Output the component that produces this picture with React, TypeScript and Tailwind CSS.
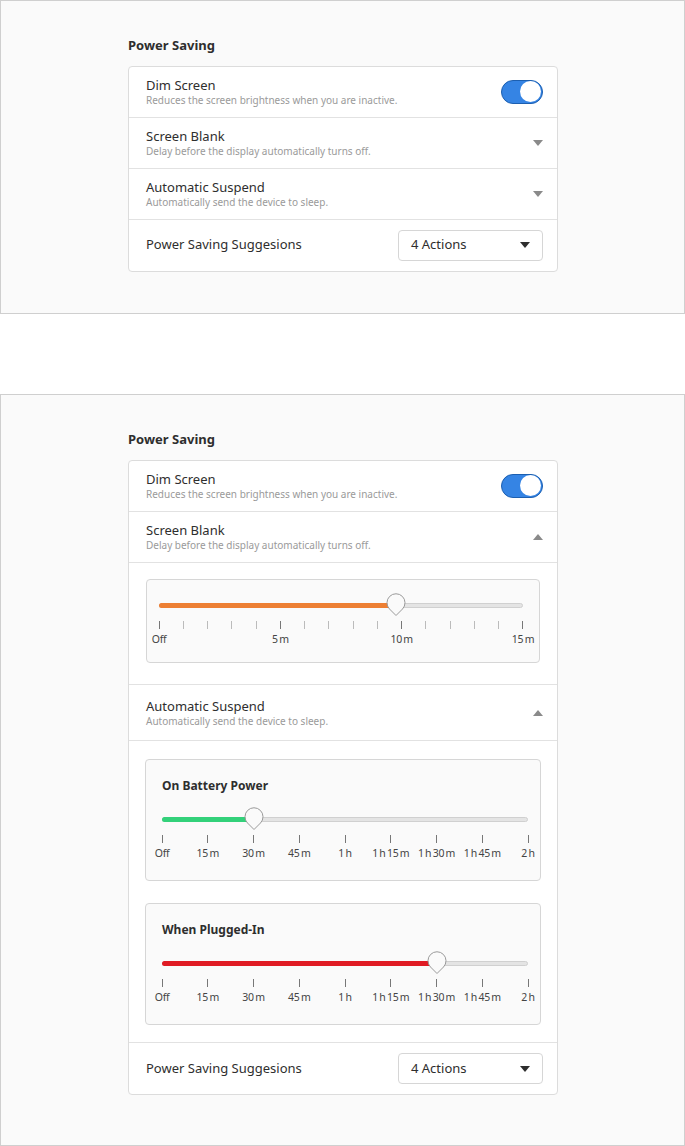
import React from 'react';

const font = { fontFamily: '"Noto Sans", sans-serif' };

const Chevron: React.FC<{ up?: boolean }> = ({ up }) => (
  <svg width="10" height="6" viewBox="0 0 10 6" className={up ? 'rotate-180' : ''}>
    <path d="M0 0h10L5 6z" fill="#8a8a8a" />
  </svg>
);

const Toggle: React.FC = () => (
  <div className="w-[42px] h-[24px] rounded-full bg-[#3584e4] border border-[#1c5fb0] flex items-center justify-end p-[1px]">
    <div className="w-[21px] h-[21px] rounded-full bg-white" />
  </div>
);

// Drop-shaped thumb pointing down at the tick row
const Thumb: React.FC = () => (
  <svg width="20" height="24" viewBox="0 0 20 24">
    <path d="M10 22.5 L3.5 16 A9 9 0 1 1 16.5 16 Z" fill="#fafafa" stroke="#9a9a9a" strokeWidth="1" />
  </svg>
);

interface Tick {
  label?: string;
}

const Slider: React.FC<{ color: string; pct: number; ticks: Tick[] }> = ({ color, pct, ticks }) => (
  <div>
    <div className="relative h-[20px]">
      <div className="absolute left-0 right-0 top-[8px] h-[5px] rounded-full bg-[#e4e4e4] border border-[#d0d0d0]" />
      <div className={`absolute left-0 top-[8px] h-[5px] rounded-full ${color}`} style={{ width: `${pct}%` }} />
      <div className="absolute top-[-2px] -ml-[10px]" style={{ left: `${pct}%` }}>
        <Thumb />
      </div>
    </div>
    <div className="flex justify-between mt-[6px]">
      {ticks.map((t, i) => (
        <div key={i} className="w-0 flex flex-col items-center">
          <div className={`w-px h-[8px] ${t.label !== undefined ? 'bg-[#777]' : 'bg-[#bbb]'}`} />
          {t.label !== undefined && (
            <div className="mt-[3px] text-[10.5px] tracking-[-0.3px] text-[#444] whitespace-nowrap">{t.label}</div>
          )}
        </div>
      ))}
    </div>
  </div>
);

const Row: React.FC<{ title: string; sub: string; right: React.ReactNode; border?: boolean }> = ({ title, sub, right, border = true }) => (
  <div className={`h-[51px] flex items-center justify-between pl-[17px] pr-[14px] ${border ? 'border-b border-[#e2e2e2]' : ''}`}>
    <div className="leading-tight">
      <div className="text-[13px] text-[#2e2e2e]">{title}</div>
      <div className="text-[10px] text-[#9a9a9a] mt-[1px]">{sub}</div>
    </div>
    {right}
  </div>
);

const Suggestions: React.FC = () => (
  <div className="h-[51px] flex items-center justify-between pl-[17px] pr-[14px]">
    <div className="text-[13px] text-[#2e2e2e]">Power Saving Suggesions</div>
    <div className="w-[145px] h-[31px] rounded-[4px] border border-[#d6d6d6] bg-white flex items-center justify-between px-[12px]">
      <span className="text-[13px] text-[#2e2e2e]">4 Actions</span>
      <svg width="10" height="6" viewBox="0 0 10 6"><path d="M0 0h10L5 6z" fill="#2e2e2e" /></svg>
    </div>
  </div>
);

const minuteTicks: Tick[] = Array.from({ length: 16 }, (_, i) =>
  i === 0 ? { label: 'Off' } : i % 5 === 0 ? { label: `${i}\u2009m` } : {}
);
const hourTicks: Tick[] = ['Off', '15\u2009m', '30\u2009m', '45\u2009m', '1\u2009h', '1\u2009h\u200915\u2009m', '1\u2009h\u200930\u2009m', '1\u2009h\u200945\u2009m', '2\u2009h'].map((label) => ({ label }));

export default function App() {
  return (
    <div style={font} className="bg-white">
      <div className="h-[314px] bg-[#fafafa] border border-[#cfcfcf] pt-[35px] pl-[127px]">
        <div className="text-[13px] font-bold text-[#2e2e2e] mb-[10px]">Power Saving</div>
        <div className="w-[430px] bg-white border border-[#dcdcdc] rounded-[4px]">
          <Row title="Dim Screen" sub="Reduces the screen brightness when you are inactive." right={<Toggle />} />
          <Row title="Screen Blank" sub="Delay before the display automatically turns off." right={<Chevron />} />
          <Row title="Automatic Suspend" sub="Automatically send the device to sleep." right={<Chevron />} />
          <Suggestions />
        </div>
      </div>

      <div className="h-[80px]" />

      <div className="h-[752px] bg-[#fafafa] border border-[#cfcfcf] pt-[35px] pl-[127px]">
        <div className="text-[13px] font-bold text-[#2e2e2e] mb-[10px]">Power Saving</div>
        <div className="w-[430px] bg-white border border-[#dcdcdc] rounded-[4px]">
          <Row title="Dim Screen" sub="Reduces the screen brightness when you are inactive." right={<Toggle />} />
          <Row title="Screen Blank" sub="Delay before the display automatically turns off." right={<Chevron up />} />
          <div className="border-b border-[#e2e2e2] px-[17px] pt-[16px] pb-[21px]">
            <div className="bg-[#fafafa] border border-[#d6d6d6] rounded-[4px] pl-[12px] pr-[16px] pt-[15px] pb-[15px]">
              <Slider color="bg-[#ed7f33]" pct={65} ticks={minuteTicks} />
            </div>
          </div>
          <div className="h-[56px] flex items-center justify-between pl-[17px] pr-[14px] border-b border-[#e2e2e2]">
            <div className="leading-tight">
              <div className="text-[13px] text-[#2e2e2e]">Automatic Suspend</div>
              <div className="text-[10px] text-[#9a9a9a] mt-[1px]">Automatically send the device to sleep.</div>
            </div>
            <Chevron up />
          </div>
          <div className="border-b border-[#e2e2e2] px-[16px] pt-[18px] pb-[17px] flex flex-col gap-[22px]">
            {[
              { title: 'On Battery Power', color: 'bg-[#33d17a]', pct: 25 },
              { title: 'When Plugged-In', color: 'bg-[#e01b24]', pct: 75 },
            ].map((s) => (
              <div key={s.title} className="h-[122px] bg-[#fafafa] border border-[#d6d6d6] rounded-[4px] pl-[16px] pr-[12px] pt-[17px]">
                <div className="text-[12px] font-bold text-[#2e2e2e] mb-[14px]">{s.title}</div>
                <Slider color={s.color} pct={s.pct} ticks={hourTicks} />
              </div>
            ))}
          </div>
          <Suggestions />
        </div>
      </div>
    </div>
  );
}
